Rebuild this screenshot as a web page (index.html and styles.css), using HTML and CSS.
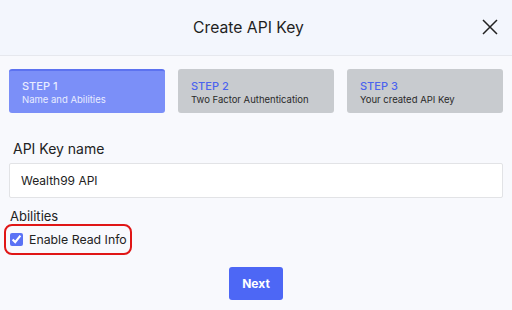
FILE: index.html
```html
<!DOCTYPE html>
<html lang="en">
<head>
    <meta charset="UTF-8">
    <meta name="viewport" content="width=device-width, initial-scale=1.0">
    <title>Create API Key</title>
    <link rel="stylesheet" href="styles.css">
</head>
<body>
<div class="modal">
    <div class="modal-header">
        <h1>Create API Key</h1>
        <button class="btn-close" type="button" aria-label="Close">
            <svg width="16" height="16" viewBox="0 0 16 16">
                <path d="M1 1L15 15M15 1L1 15" stroke="#222" stroke-width="1.5" fill="none"/>
            </svg>
        </button>
    </div>
    <div class="modal-body">
        <div class="steps">
            <div class="step active">
                <div class="step-num">STEP 1</div>
                <div class="step-title">Name and Abilities</div>
            </div>
            <div class="step">
                <div class="step-num">STEP 2</div>
                <div class="step-title">Two Factor Authentication</div>
            </div>
            <div class="step">
                <div class="step-num">STEP 3</div>
                <div class="step-title">Your created API Key</div>
            </div>
        </div>
        <form>
            <div class="form-group">
                <label for="key_name">API Key name</label>
                <input type="text" id="key_name" name="key_name" value="Wealth99 API">
            </div>
            <div class="abilities">
                <div class="abilities-title">Abilities</div>
                <label class="check">
                    <input type="checkbox" checked>
                    <span>Enable Read Info</span>
                </label>
            </div>
            <button type="button" class="btn-next">Next</button>
        </form>
    </div>
</div>
</body>
</html>
```

FILE: styles.css
```css
body {
    font-family: Inter, "Noto Sans", sans-serif;
    background-color: #f8f9fd;
    margin: 0;
    padding: 0;
    color: #222;
}

.modal-header {
    height: 56px;
    background-color: #f3f6fd;
    border-bottom: 1px solid #e6e8ee;
    box-sizing: border-box;
    display: flex;
    align-items: center;
    justify-content: center;
    padding-right: 15px;
    position: relative;
}

.modal-header h1 {
    margin: 0;
    font-size: 15.7px;
    font-weight: 400;
    color: #1f1f1f;
}

.btn-close {
    position: absolute;
    right: 14px;
    top: 19px;
    background: none;
    border: none;
    padding: 0;
    width: 16px;
    height: 16px;
    cursor: pointer;
}

.modal-body {
    padding: 13px 9px 0;
}

.steps {
    display: grid;
    grid-template-columns: repeat(3, 1fr);
    gap: 13px;
}

.step {
    height: 44px;
    box-sizing: border-box;
    padding: 10px 13px 0;
    background-color: #c8cbcf;
    border-radius: 3px;
}

.step.active {
    background-color: #7b8ff8;
    border-top: 2px solid #5c72f0;
    padding-top: 8px;
}

.step-num {
    font-size: 11px;
    font-weight: 500;
    color: #4b63ee;
    line-height: 14px;
}

.step-title {
    font-size: 9.5px;
    color: #2a2a2a;
    line-height: 14px;
}

.step.active .step-num,
.step.active .step-title {
    color: #e8ecff;
}

.form-group {
    margin-top: 27px;
}

.form-group label {
    display: block;
    font-size: 14px;
    color: #222;
    margin: 0 0 6px 4px;
    line-height: 17px;
}

.form-group input {
    width: 100%;
    height: 35px;
    box-sizing: border-box;
    padding: 0 11px;
    border: 1px solid #e2e3e6;
    border-radius: 2px;
    background-color: #fff;
    font-family: inherit;
    font-size: 12px;
    color: #222;
}

.abilities {
    margin-top: 10px;
}

.abilities-title {
    font-size: 13px;
    line-height: 16px;
    margin-left: 1px;
}

.check {
    display: inline-flex;
    align-items: center;
    gap: 6px;
    margin: 0 0 0 -5px;
    height: 31px;
    box-sizing: border-box;
    padding: 0 3px 0 4px;
    border: 2px solid #e01616;
    border-radius: 8px;
    font-size: 12.3px;
}

.check input {
    margin: 0;
    width: 13px;
    height: 13px;
    accent-color: #5a72f5;
}

.btn-next {
    display: block;
    margin: 12px auto 0;
    padding: 0;
    width: 54px;
    height: 33px;
    background-color: #4d67f5;
    color: #fff;
    border: none;
    border-radius: 3px;
    font-family: inherit;
    font-size: 12px;
    font-weight: 700;
    cursor: pointer;
}
```
